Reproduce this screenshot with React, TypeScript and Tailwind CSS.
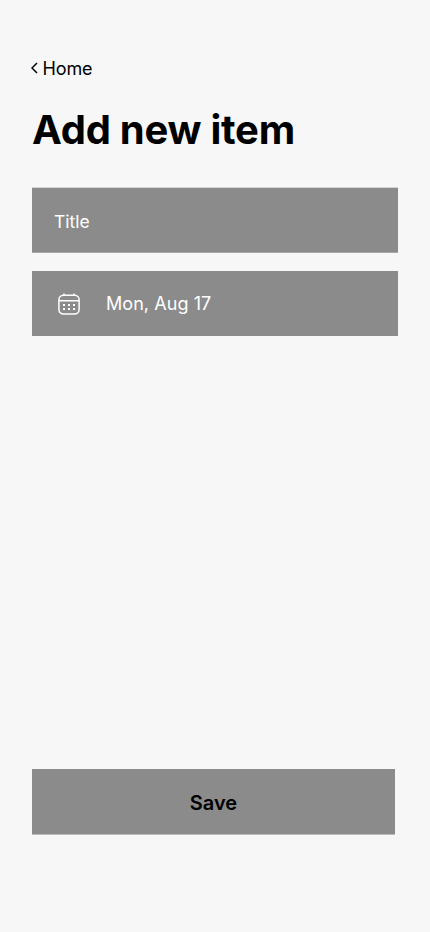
export default function App() {
  return (
    <main className="flex h-[932px] w-[430px] flex-col bg-[#f7f7f7] px-8 pt-[57px] font-['Inter',sans-serif] text-black">
      <button className="-ml-px flex h-6 items-center self-start text-lg leading-6 tracking-[-0.18px]">
        <svg className="mr-[4.6px] mb-0.5 h-3 w-[7px]" viewBox="0 0 7 12" fill="none" stroke="currentColor" strokeWidth="1.5">
          <path d="M6 1 1 6l5 5" />
        </svg>
        Home
      </button>
      <h1 className="mt-6 text-[40px] leading-[50px] font-bold tracking-[-0.25px]">Add new item</h1>
      <div className="mt-8 flex h-[66px] items-center border-t border-b border-t-[#d4d4d4] border-b-[#a8a8a8] bg-[#8b8b8b] pt-[5px] pl-[22px] text-[17.5px] text-white">Title</div>
      <div className="mt-[18px] flex h-[65px] items-center bg-[#8b8b8b] pl-[26px] text-lg tracking-[0.06px] text-white">
        <svg className="mr-[26px] h-[22px] w-[22px]" viewBox="0 0 22 22" fill="none" stroke="currentColor" strokeWidth="1.5">
          <rect x="0.9" y="2.2" width="20.2" height="18.9" rx="4.5" />
          <path d="M1 7.8h20M6 .5v2M16 .5v2" />
          <path d="M5 12h2m3 0h2m3 0h2M5 16h2m3 0h2m3 0h2" strokeWidth="2" />
        </svg>
        Mon, Aug 17
      </div>
      <button className="mt-[433px] flex h-[66px] w-[363px] items-center justify-center border-b border-[#b9b9b9] bg-[#8b8b8b] pt-[3px] text-xl font-semibold">Save</button>
    </main>
  );
}
